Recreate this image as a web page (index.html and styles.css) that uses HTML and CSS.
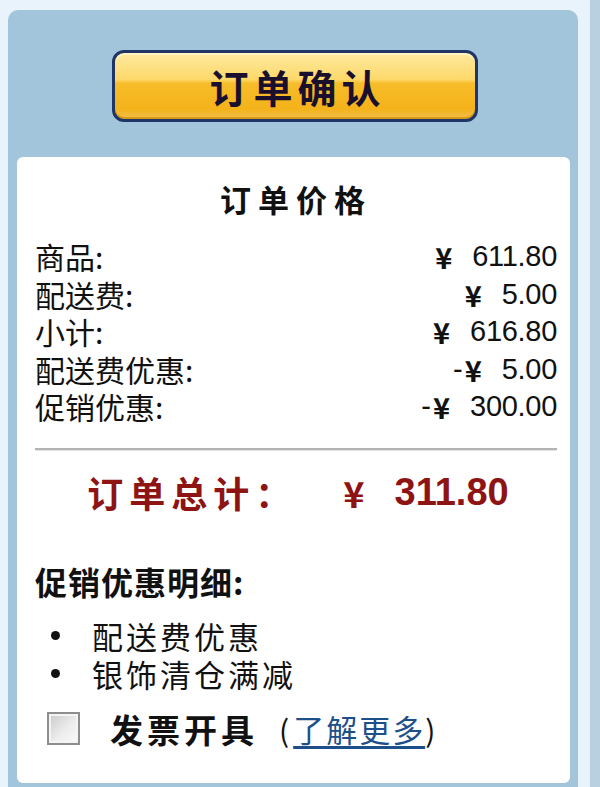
FILE: index.html
```html
<!DOCTYPE html>
<html lang="zh-CN">
<head>
<meta charset="utf-8">
<title>订单确认</title>
<link rel="stylesheet" href="styles.css">
</head>
<body>
<div class="page">
  <div class="panel">
    <div class="btn-wrap">
      <button class="confirm-btn" type="button">订单确认</button>
    </div>
    <div class="card">
      <h2 class="title">订单价格</h2>
      <div class="rows">
        <div class="row"><span class="label">商品:</span><span class="value"><span class="yen">¥</span><span class="num">611.80</span></span></div>
        <div class="row"><span class="label">配送费:</span><span class="value"><span class="yen">¥</span><span class="num">5.00</span></span></div>
        <div class="row"><span class="label">小计:</span><span class="value"><span class="yen">¥</span><span class="num">616.80</span></span></div>
        <div class="row"><span class="label">配送费优惠:</span><span class="value"><span class="minus">-</span><span class="yen">¥</span><span class="num">5.00</span></span></div>
        <div class="row"><span class="label">促销优惠:</span><span class="value"><span class="minus">-</span><span class="yen">¥</span><span class="num">300.00</span></span></div>
      </div>
      <div class="sep"></div>
      <div class="total"><span class="total-label">订单总计：</span><span class="total-yen">¥</span><span class="total-num">311.80</span></div>
      <h3 class="promo-title">促销优惠明细:</h3>
      <ul class="promo-list">
        <li><span class="dot"></span>配送费优惠</li>
        <li><span class="dot"></span>银饰清仓满减</li>
      </ul>
      <div class="invoice">
        <span class="checkbox"></span>
        <span class="invoice-label">发票开具</span>
        <span class="paren paren-open">(</span><a class="more" href="#">了解更多</a><span class="paren">)</span>
      </div>
    </div>
  </div>
</div>
</body>
</html>
```

FILE: styles.css
```css
html, body {
  margin: 0;
  padding: 0;
}
body {
  background: #e9f3fb;
  font-family: "Noto Sans CJK SC", "Liberation Sans", sans-serif;
  color: #111;
  overflow: hidden;
}
.page {
  width: 600px;
  height: 787px;
  border-right: 10px solid #b9d0e0;
  padding-top: 10px;
  box-sizing: border-box;
}
.panel {
  margin-left: 8px;
  width: 570px;
  height: 777px;
  background: #a2c5db;
  border-radius: 10px 10px 0 0;
  padding-top: 40px;
  box-sizing: border-box;
}
.btn-wrap {
  display: flex;
  justify-content: center;
  padding-left: 4px;
}
.confirm-btn {
  width: 366px;
  height: 72px;
  border: 3px solid #1e3566;
  border-radius: 12px;
  background: linear-gradient(to bottom, #fde9a0 0%, #fdd96a 40%, #f7bd2a 46%, #f4b21a 85%, #f0c050 100%);
  box-shadow: inset 0 2px 0 #fff2c4, inset 0 -2px 0 #d79a16;
  font-family: "Noto Sans CJK SC", sans-serif;
  font-weight: 700;
  font-size: 39px;
  letter-spacing: 5px;
  text-indent: 5px;
  color: #1a102e;
  padding: 0;
  line-height: 1;
  cursor: pointer;
}
.card {
  margin: 35px 8px 0 9px;
  height: 626px;
  background: #fff;
  border-radius: 6px;
  padding: 22px 13px 0 18px;
  box-sizing: border-box;
}
.title {
  margin: 0;
  text-align: center;
  font-size: 31px;
  line-height: 40px;
  font-weight: 700;
  letter-spacing: 7px;
  text-indent: 7px;
  padding-right: 7px;
}
.rows {
  margin-top: 19px;
}
.row {
  display: flex;
  justify-content: space-between;
  align-items: center;
  height: 37.5px;
}
.label {
  font-size: 30px;
  line-height: 37.5px;
}
.value {
  display: flex;
  align-items: center;
  font-family: "Liberation Sans", sans-serif;
  font-size: 29px;
  line-height: 37.5px;
}
.minus {
  margin-right: 2px;
}
.yen {
  font-family: "Noto Sans CJK SC", sans-serif;
  font-weight: 700;
  font-size: 29px;
  margin-right: 20px;
}
.num {
  letter-spacing: -0.3px;
}
.sep {
  margin-top: 22px;
  height: 2px;
  background: #b4b4b4;
  box-shadow: 0 1px 1px #e2e2e2;
}
.total {
  margin-top: 20px;
  display: flex;
  justify-content: center;
  align-items: center;
  height: 44px;
  color: #8e1414;
  font-weight: 700;
  padding-left: 4px;
}
.total-label {
  font-size: 36px;
  letter-spacing: 6px;
  line-height: 44px;
}
.total-yen {
  margin-left: 46px;
  font-size: 36px;
  line-height: 44px;
}
.total-num {
  margin-left: 30px;
  font-family: "Liberation Sans", sans-serif;
  font-size: 38px;
  line-height: 44px;
}
.promo-title {
  margin: 47px 0 0 0;
  font-size: 32px;
  line-height: 40px;
  font-weight: 700;
  letter-spacing: 1px;
}
.promo-list {
  list-style: none;
  margin: 16px 0 0 0;
  padding: 0;
}
.promo-list li {
  display: flex;
  align-items: center;
  height: 38px;
  font-size: 31px;
  line-height: 38px;
  letter-spacing: 3px;
}
.dot {
  width: 9px;
  height: 9px;
  border-radius: 50%;
  background: #111;
  margin-left: 16px;
  margin-right: 32px;
}
.invoice {
  margin-top: 16px;
  display: flex;
  align-items: center;
  height: 40px;
}
.checkbox {
  width: 29px;
  height: 29px;
  margin-left: 12px;
  border: 2px solid #8e8e8e;
  background: linear-gradient(135deg, #c9c9c9 0%, #ececec 55%, #fafafa 100%);
  box-shadow: inset 0 0 0 2px #f4f4f4;
}
.invoice-label {
  margin-left: 30px;
  font-size: 33px;
  line-height: 40px;
  font-weight: 700;
  letter-spacing: 4px;
}
.paren {
  font-size: 30px;
  line-height: 40px;
  color: #111;
}
.paren-open {
  margin-left: 21px;
}
.more {
  font-size: 31px;
  line-height: 40px;
  color: #1d4f8a;
  text-decoration: underline;
  text-underline-offset: 4px;
  letter-spacing: 2px;
  padding-left: 4px;
}
```
